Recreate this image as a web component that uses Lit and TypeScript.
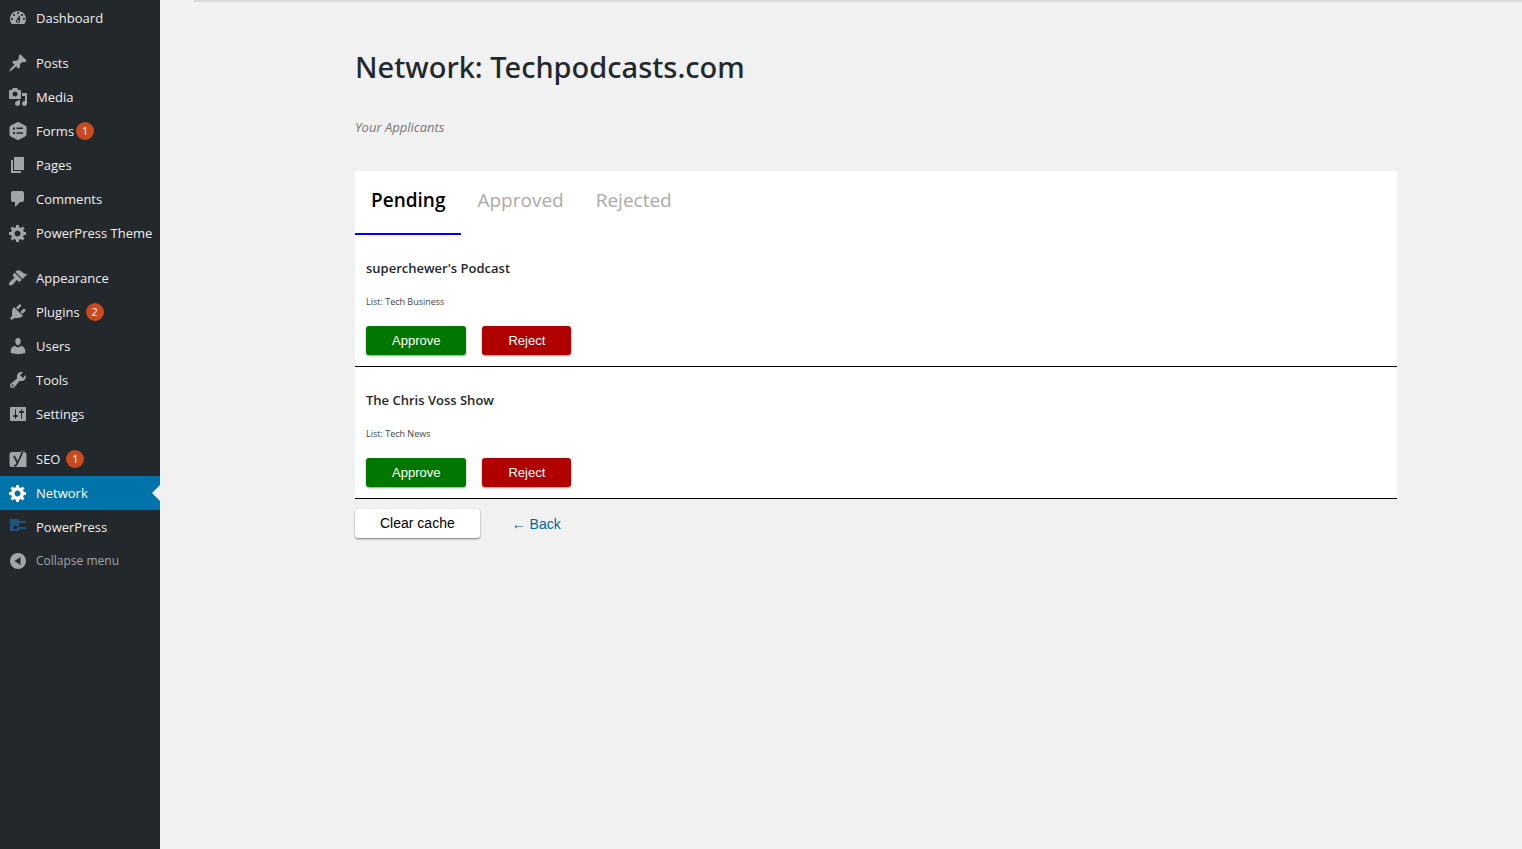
import { LitElement, html, css, svg, nothing } from "lit";
import { customElement, property, state } from "lit/decorators.js";

const cutout = (d: string) => svg`<path fill-rule="evenodd" d=${d}></path>`;

const GEAR = cutout(
  "M18 12h-2.18c-.17.7-.44 1.35-.81 1.93l1.54 1.54-2.1 2.1-1.54-1.54c-.58.36-1.23.63-1.91.79V19H8v-2.18c-.68-.16-1.33-.43-1.91-.79l-1.54 1.54-2.12-2.12 1.54-1.54c-.36-.58-.63-1.23-.79-1.91H1V9.03h2.17c.16-.7.44-1.35.8-1.94L2.43 5.55l2.1-2.1 1.54 1.54c.58-.37 1.24-.64 1.93-.81V2h3v2.18c.68.16 1.33.43 1.91.79l1.54-1.54 2.12 2.12-1.54 1.54c.36.59.64 1.24.8 1.94H18V12zm-8.5 1.5c1.66 0 3-1.34 3-3s-1.34-3-3-3-3 1.34-3 3 1.34 3 3 3z"
);

const ICONS: Record<string, unknown> = {
  dashboard: cutout(
    "M3.76 16h12.48c1.1-1.37 1.76-3.11 1.76-5 0-4.42-3.58-8-8-8s-8 3.58-8 8c0 1.89.66 3.63 1.76 5zM10 4c.55 0 1 .45 1 1s-.45 1-1 1-1-.45-1-1 .45-1 1-1zM6 6c.55 0 1 .45 1 1s-.45 1-1 1-1-.45-1-1 .45-1 1-1zm8 0c.55 0 1 .45 1 1s-.45 1-1 1-1-.45-1-1 .45-1 1-1zm-5.37 5.55L12 7v6c0 1.1-.9 2-2 2s-2-.9-2-2c0-.57.24-1.08.63-1.45zM4 10c.55 0 1 .45 1 1s-.45 1-1 1-1-.45-1-1 .45-1 1-1zm12 0c.55 0 1 .45 1 1s-.45 1-1 1-1-.45-1-1 .45-1 1-1zm-5 3c0-.55-.45-1-1-1s-1 .45-1 1 .45 1 1 1 1-.45 1-1z"
  ),
  posts: cutout(
    "M10.44 3.02l1.82-1.82 6.36 6.35-1.83 1.82c-1.05-.68-2.48-.57-3.41.36l-.75.75c-.92.93-1.04 2.35-.35 3.41l-1.83 1.82-2.41-2.41-2.8 2.79c-.42.42-3.38 2.71-3.8 2.29s1.86-3.39 2.28-3.81l2.79-2.79L4.1 9.36l1.83-1.82c1.05.69 2.48.57 3.4-.36l.75-.75c.93-.92 1.05-2.35.36-3.41z"
  ),
  media: cutout(
    "M13 11V4c0-.55-.45-1-1-1h-1.67L9 1H5L3.67 3H2c-.55 0-1 .45-1 1v7c0 .55.45 1 1 1h10c.55 0 1-.45 1-1zM7 4.5c1.38 0 2.5 1.12 2.5 2.5S8.38 9.5 7 9.5 4.5 8.38 4.5 7 5.62 4.5 7 4.5zM14 6h5v10.5c0 1.38-1.12 2.5-2.5 2.5S14 17.88 14 16.5s1.12-2.5 2.5-2.5c.17 0 .34.02.5.05V9h-3V6zm-4 8.05V13h2v3.5c0 1.38-1.12 2.5-2.5 2.5S7 17.88 7 16.5 8.12 14 9.5 14c.17 0 .34.02.5.05z"
  ),
  forms: svg`<path fill-rule="evenodd" d="M9 1.3Q10 .7 11 1.3L17.6 4.8Q18.5 5.3 18.5 6.4V13.6Q18.5 14.7 17.6 15.2L11 18.8Q10 19.3 9 18.8L2.4 15.2Q1.5 14.7 1.5 13.6V6.4Q1.5 5.3 2.4 4.8ZM5 6.5V8.5H7V6.5ZM8.5 6.5V8H15V6.5ZM5 11V13H7V11ZM8.5 11.3V12.8H15V11.3Z"></path>`,
  pages: cutout("M6 15V2h10v13H6zm-1 1h8v2H3V5h2v11z"),
  comments: cutout(
    "M5 2h9c1.1 0 2 .9 2 2v7c0 1.1-.9 2-2 2h-2l-5 5v-5H5c-1.1 0-2-.9-2-2V4c0-1.1.9-2 2-2z"
  ),
  gear: GEAR,
  appearance: cutout(
    "M14.48 11.06L7.41 3.99l1.5-1.5c.5-.56 2.3-.47 3.51.32 1.21.8 1.43 1.28 2.91 2.1 1.18.64 2.45 1.26 4.45.85zm-.71.71L6.7 4.7 4.93 6.47c-.39.39-.39 1.02 0 1.41l1.06 1.06c.39.39.39 1.03 0 1.42-.6.6-1.43 1.11-2.21 1.69-.35.26-.7.53-1.01.84C1.43 14.23.4 16.08 1.4 17.07c.99 1 2.84-.03 4.18-1.36.31-.31.58-.66.85-1.02.57-.78 1.08-1.61 1.69-2.21.39-.39 1.02-.39 1.41 0l1.06 1.06c.39.39 1.02.39 1.41 0z"
  ),
  plugins: cutout(
    "M13.11 4.36L9.87 7.6 8 5.73l3.24-3.24c.35-.34 1.05-.2 1.56.32.52.51.66 1.21.31 1.55zm-8 1.77l.91-1.12 9.01 9.01-1.19.84c-.71.71-2.63 1.16-3.82 1.16H6.14L4.9 17.26c-.59.59-1.54.59-2.12 0-.59-.58-.59-1.53 0-2.12l1.24-1.24v-3.88c0-1.13.4-3.19 1.09-3.89zm7.26 3.97l3.24-3.24c.34-.35 1.04-.21 1.55.31.52.51.66 1.21.31 1.55l-3.24 3.25z"
  ),
  users: cutout(
    "M10 9.25c-2.27 0-2.73-3.44-2.73-3.44C7 4.02 7.82 2 9.97 2c2.16 0 2.98 2.02 2.71 3.81 0 0-.41 3.44-2.68 3.44zm0 2.57L12.72 10c2.39 0 4.52 2.33 4.52 4.53v2.49s-3.65 1.13-7.24 1.13c-3.65 0-7.24-1.13-7.24-1.13v-2.49c0-2.25 1.94-4.48 4.47-4.48z"
  ),
  tools: cutout(
    "M16.68 9.77c-1.34 1.34-3.3 1.67-4.95.99l-5.41 6.52c-.99.99-2.59.99-3.58 0s-.99-2.59 0-3.57l6.52-5.42c-.68-1.65-.35-3.61.99-4.95 1.28-1.28 3.12-1.62 4.72-1.06l-2.89 2.89 2.82 2.82 2.86-2.87c.53 1.58.18 3.39-1.08 4.65zM3.81 16.21c.4.39 1.04.39 1.43 0 .4-.4.4-1.04 0-1.43-.39-.4-1.03-.4-1.43 0-.39.39-.39 1.03 0 1.43z"
  ),
  settings: cutout(
    "M18 16V4c0-.55-.45-1-1-1H3c-.55 0-1 .45-1 1v12c0 .55.45 1 1 1h14c.55 0 1-.45 1-1zM8 11h1c.55 0 1 .45 1 1s-.45 1-1 1H8v1.5c0 .28-.22.5-.5.5s-.5-.22-.5-.5V13H6c-.55 0-1-.45-1-1s.45-1 1-1h1V5.5c0-.28.22-.5.5-.5s.5.22.5.5V11zm5-2h-1c-.55 0-1-.45-1-1s.45-1 1-1h1V5.5c0-.28.22-.5.5-.5s.5.22.5.5V7h1c.55 0 1 .45 1 1s-.45 1-1 1h-1v5.5c0 .28-.22.5-.5.5s-.5-.22-.5-.5V9z"
  ),
  seo: svg`
    <path d="M4 3H13L14 1H16.5L15.8 3Q18.5 3 18.5 6V18H4Q1.5 18 1.5 15.5V5.500Q1.500 3 4 3Z"></path>
    <path d="M6 7L9.300 13.500M15.600 .5L9.600 14Q8.300 17 5.800 17" fill="none" stroke="#23282d" stroke-width="1.700"></path>`,
  powerpress: svg`
    <path fill="#23527c" fill-rule="evenodd" d="M2 2H11V14H2ZM7.5 8.5A2 2 0 1 0 7.51 8.5Z"></path>
    <path fill="#23527c" d="M11 4H18V6H11ZM11 10H18V12H11Z"></path>`,
  collapse: svg`<path fill-rule="evenodd" d="M10 2a8 8 0 1 0 .01 0ZM12.5 6V14L6.5 10Z"></path>`,
};

interface MenuEntry {
  icon: string;
  label: string;
  count?: number;
  tight?: boolean;
  current?: boolean;
}

const MENU: MenuEntry[][] = [
  [{ icon: "dashboard", label: "Dashboard" }],
  [
    { icon: "posts", label: "Posts" },
    { icon: "media", label: "Media" },
    { icon: "forms", label: "Forms", count: 1, tight: true },
    { icon: "pages", label: "Pages" },
    { icon: "comments", label: "Comments" },
    { icon: "gear", label: "PowerPress Theme" },
  ],
  [
    { icon: "appearance", label: "Appearance" },
    { icon: "plugins", label: "Plugins", count: 2 },
    { icon: "users", label: "Users" },
    { icon: "tools", label: "Tools" },
    { icon: "settings", label: "Settings" },
  ],
  [
    { icon: "seo", label: "SEO", count: 1 },
    { icon: "gear", label: "Network", current: true },
    { icon: "powerpress", label: "PowerPress" },
  ],
];

const icon = (name: string) =>
  html`<svg class="icon" viewBox="0 0 20 20" aria-hidden="true">${ICONS[name]}</svg>`;

@customElement("admin-menu")
class AdminMenu extends LitElement {
  static styles = css`
    :host {
      display: block;
      padding-top: 1px;
      background: #23282d;
      font: 13px/18px "Open Sans", "Noto Sans", sans-serif;
    }
    .group {
      list-style: none;
      margin: 0 0 11px;
      padding: 0;
    }
    .group:last-of-type {
      margin: 0;
    }
    .entry {
      box-sizing: border-box;
      display: flex;
      align-items: center;
      width: 100%;
      height: 34px;
      margin: 0;
      padding: 0 0 0 8px;
      border: 0;
      background: none;
      color: #eee;
      font: inherit;
      text-align: left;
      text-decoration: none;
      white-space: nowrap;
      cursor: pointer;
    }
    .icon {
      flex: none;
      width: 20px;
      height: 20px;
      margin-right: 8px;
      fill: #a0a5aa;
    }
    .current {
      position: relative;
      background: #0073aa;
      color: #fff;
    }
    .current .icon {
      fill: #fff;
    }
    .current::after {
      content: "";
      position: absolute;
      right: 0;
      top: 9px;
      border: 8px solid transparent;
      border-left-width: 0;
      border-right-color: #f1f1f1;
    }
    .count {
      min-width: 18px;
      height: 18px;
      margin-left: 6px;
      border-radius: 9px;
      background: #ca4a1f;
      color: #fff;
      font-size: 11px;
      text-align: center;
    }
    .tight {
      margin-left: 2px;
    }
    .collapse {
      color: #a0a5aa;
      font-size: 12px;
    }
  `;

  render() {
    return html`
      <nav aria-label="Main menu">
        ${MENU.map(
          (group) => html`<ul class="group">
            ${group.map(
              (e) => html`<li>
                <a class="entry ${e.current ? "current" : ""}" href="#" aria-current=${e.current ? "page" : nothing}>
                  ${icon(e.icon)}<span>${e.label}</span>${e.count
                    ? html`<span class="count ${e.tight ? "tight" : ""}">${e.count}</span>`
                    : nothing}
                </a>
              </li>`
            )}
          </ul>`
        )}
        <button class="entry collapse" type="button">${icon("collapse")}<span>Collapse menu</span></button>
      </nav>
    `;
  }
}

@customElement("applicant-row")
class ApplicantRow extends LitElement {
  static styles = css`
    :host {
      display: block;
      padding: 24px 11px 11px;
      border-bottom: 1px solid #000;
    }
    .name {
      margin: 0;
      color: #23282d;
      font-size: 13px;
      font-weight: 600;
      line-height: 18px;
    }
    .list {
      margin: 17px 0;
      color: #444;
      font-size: 9px;
      line-height: 15px;
    }
    .actions {
      display: flex;
      gap: 16px;
    }
    .button {
      height: 29px;
      padding: 0 26px;
      border: 0;
      border-radius: 3px;
      box-shadow: 0 1px 2px rgba(0, 0, 0, 0.4);
      color: #fff;
      font: 13px/29px "Liberation Sans", Arial, sans-serif;
      cursor: pointer;
    }
    .approve {
      background: #007800;
    }
    .reject {
      background: #b00000;
    }
  `;

  @property() name = "";
  @property() list = "";

  render() {
    return html`
      <h2 class="name">${this.name}</h2>
      <p class="list">List: ${this.list}</p>
      <div class="actions">
        <button class="button approve" type="button">Approve</button>
        <button class="button reject" type="button">Reject</button>
      </div>
    `;
  }
}

@customElement("app-root")
class AppRoot extends LitElement {
  static styles = css`
    :host {
      display: grid;
      grid-template-columns: 160px minmax(0, 1fr);
      min-height: 100vh;
      background: #f1f1f1;
      font-family: "Open Sans", "Noto Sans", sans-serif;
    }
    .main {
      padding-left: 34px;
    }
    .rule {
      height: 2px;
      margin: 0;
      border: 0;
      background: #dadada;
    }
    .page {
      padding: 45px 125px 40px 161px;
    }
    .title {
      margin: 0;
      color: #23282d;
      font-family: "Noto Sans", "Open Sans", sans-serif;
      font-size: 29px;
      font-weight: 500;
      line-height: 40px;
    }
    .subtitle {
      margin: 30px 0 34px;
      color: #777;
      font-size: 13px;
      font-style: italic;
      line-height: 20px;
    }
    .panel {
      background: #fff;
    }
    .tabs {
      display: flex;
    }
    .tab {
      height: 64px;
      padding: 0 16px 5px;
      border: 0;
      border-bottom: 2px solid transparent;
      background: none;
      color: #aaa;
      font: 19px/26px "Open Sans", "Noto Sans", sans-serif;
      cursor: pointer;
    }
    .selected {
      border-bottom-color: #00f;
      color: #000;
      font-weight: 600;
    }
    .footer {
      display: flex;
      align-items: center;
      gap: 32px;
      padding-top: 10px;
    }
    .clear {
      height: 29px;
      padding: 0 25px;
      border: 0;
      border-radius: 3px;
      background: #fff;
      box-shadow: 0 1px 2px rgba(0, 0, 0, 0.5);
      color: #000;
      font: 14px/29px "Liberation Sans", Arial, sans-serif;
      cursor: pointer;
    }
    .back {
      color: #0067a0;
      font: 14px/20px "Liberation Sans", Arial, sans-serif;
      text-decoration: none;
    }
  `;

  @state() tab = "Pending";

  render() {
    return html`
      <admin-menu></admin-menu>
      <main class="main">
        <hr class="rule" />
        <div class="page">
          <h1 class="title">Network: Techpodcasts.com</h1>
          <p class="subtitle">Your Applicants</p>
          <section class="panel">
            <div class="tabs" role="tablist">
              ${["Pending", "Approved", "Rejected"].map(
                (t) => html`<button
                  class="tab ${t === this.tab ? "selected" : ""}"
                  type="button"
                  role="tab"
                  aria-selected=${t === this.tab}
                  @click=${() => (this.tab = t)}
                >${t}</button>`
              )}
            </div>
            <applicant-row name="superchewer's Podcast" list="Tech Business"></applicant-row>
            <applicant-row name="The Chris Voss Show" list="Tech News"></applicant-row>
          </section>
          <div class="footer">
            <button class="clear" type="button">Clear cache</button>
            <a class="back" href="#">← Back</a>
          </div>
        </div>
      </main>
    `;
  }
}
